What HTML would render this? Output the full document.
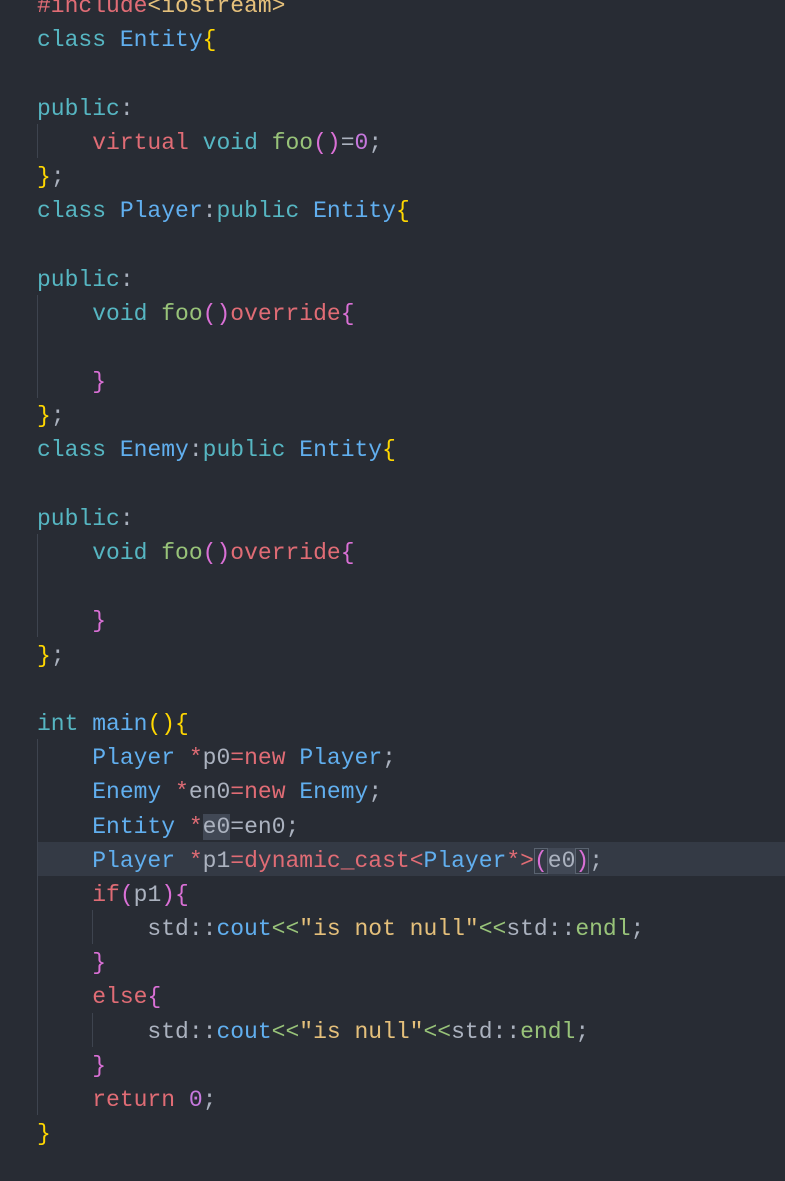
<!DOCTYPE html>
<html><head><meta charset="utf-8"><style>
html,body{margin:0;padding:0;background:#282c34;width:785px;height:1181px;overflow:hidden}
pre{margin:0;position:absolute;left:37px;top:-11px;font-family:"Liberation Mono",monospace;font-size:23px;line-height:34.18px;color:#abb2bf;white-space:pre}
.r{color:#e06c75}.c{color:#56b6c2}.b{color:#61afef}.g{color:#98c379}.y{color:#e5c07b}.p{color:#c678dd}
.b1{color:#ffd700}.b2{color:#da70d6}
.hl{position:absolute;left:37px;right:0;top:842px;height:34px;background:#343a45}
.gd{position:absolute;width:1px;background:#3e444f}
.sel{background:#414855}
.bx{outline:1px solid #5a6370;outline-offset:-1px}
</style></head><body>
<div class="hl"></div>
<div class="gd" style="left:37px;top:124px;height:34px"></div>
<div class="gd" style="left:37px;top:295px;height:103px"></div>
<div class="gd" style="left:37px;top:534px;height:103px"></div>
<div class="gd" style="left:37px;top:739px;height:376px"></div>
<div class="gd" style="left:92px;top:910px;height:34px"></div>
<div class="gd" style="left:92px;top:1013px;height:34px"></div>
<pre><span class="r">#include</span><span class="y">&lt;iostream&gt;</span>
<span class="c">class</span> <span class="b">Entity</span><span class="b1">{</span>

<span class="c">public</span>:
    <span class="r">virtual</span> <span class="c">void</span> <span class="g">foo</span><span class="b2">()</span>=<span class="p">0</span>;
<span class="b1">}</span>;
<span class="c">class</span> <span class="b">Player</span>:<span class="c">public</span> <span class="b">Entity</span><span class="b1">{</span>

<span class="c">public</span>:
    <span class="c">void</span> <span class="g">foo</span><span class="b2">()</span><span class="r">override</span><span class="b2">{</span>

    <span class="b2">}</span>
<span class="b1">}</span>;
<span class="c">class</span> <span class="b">Enemy</span>:<span class="c">public</span> <span class="b">Entity</span><span class="b1">{</span>

<span class="c">public</span>:
    <span class="c">void</span> <span class="g">foo</span><span class="b2">()</span><span class="r">override</span><span class="b2">{</span>

    <span class="b2">}</span>
<span class="b1">}</span>;

<span class="c">int</span> <span class="b">main</span><span class="b1">(){</span>
    <span class="b">Player</span> <span class="r">*</span>p0<span class="r">=new</span> <span class="b">Player</span>;
    <span class="b">Enemy</span> <span class="r">*</span>en0<span class="r">=new</span> <span class="b">Enemy</span>;
    <span class="b">Entity</span> <span class="r">*</span><span class="sel">e0</span>=en0;
    <span class="b">Player</span> <span class="r">*</span>p1<span class="r">=dynamic_cast&lt;</span><span class="b">Player</span><span class="r">*&gt;</span><span class="b2 bx">(</span><span class="sel">e0</span><span class="b2 bx">)</span>;
    <span class="r">if</span><span class="b2">(</span>p1<span class="b2">){</span>
        std::<span class="b">cout</span><span class="g">&lt;&lt;</span><span class="y">"is not null"</span><span class="g">&lt;&lt;</span>std::<span class="g">endl</span>;
    <span class="b2">}</span>
    <span class="r">else</span><span class="b2">{</span>
        std::<span class="b">cout</span><span class="g">&lt;&lt;</span><span class="y">"is null"</span><span class="g">&lt;&lt;</span>std::<span class="g">endl</span>;
    <span class="b2">}</span>
    <span class="r">return</span> <span class="p">0</span>;
<span class="b1">}</span></pre>
</body></html>
